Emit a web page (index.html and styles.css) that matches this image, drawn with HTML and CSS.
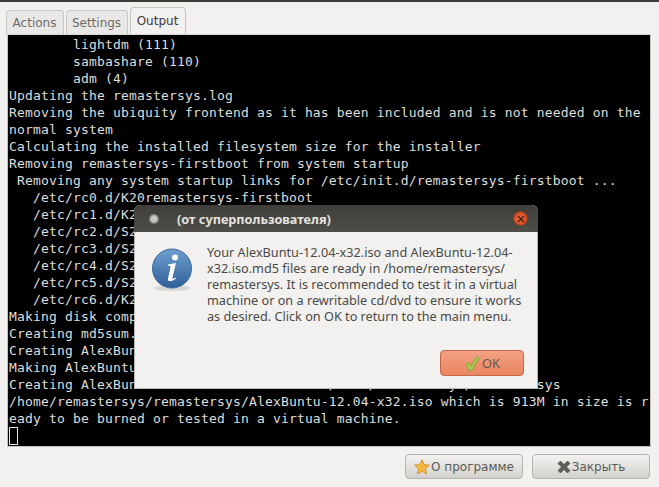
FILE: index.html
```html
<!DOCTYPE html>
<html lang="en">
<head>
<meta charset="utf-8">
<title>Output</title>
<link rel="stylesheet" href="styles.css">
</head>
<body>
<div class="window">
  <div class="tabs">
    <div class="tab">Actions</div>
    <div class="tab">Settings</div>
    <div class="tab active">Output</div>
  </div>
  <div class="frame">
    <pre class="terminal">        lightdm (111)
        sambashare (110)
        adm (4)
Updating the remastersys.log
Removing the ubiquity frontend as it has been included and is not needed on the
normal system
Calculating the installed filesystem size for the installer
Removing remastersys-firstboot from system startup
 Removing any system startup links for /etc/init.d/remastersys-firstboot ...
   /etc/rc0.d/K20remastersys-firstboot
   /etc/rc1.d/K2
   /etc/rc2.d/S2
   /etc/rc3.d/S2
   /etc/rc4.d/S2
   /etc/rc5.d/S2
   /etc/rc6.d/K2
Making disk comp
Creating md5sum.
Creating AlexBun
Making AlexBuntu
Creating AlexBuntu-12.04-x32.iso.md5 in /home/remastersys/remastersys
/home/remastersys/remastersys/AlexBuntu-12.04-x32.iso which is 913M in size is r
eady to be burned or tested in a virtual machine.
<span class="cursor"></span></pre>
  </div>
  <div class="actions">
    <button class="btn">
      <svg class="btn-icon" viewBox="0 0 16 16" width="16" height="16"><path d="M8 .8l2.2 4.8 5.2.6-3.9 3.5 1.1 5.2L8 12.3l-4.6 2.6 1.1-5.2L.6 6.2l5.2-.6z" fill="#f6b73c" stroke="#c98a2c" stroke-width=".8" stroke-linejoin="round"/></svg>
      <span>О программе</span>
    </button>
    <button class="btn">
      <svg class="btn-icon" viewBox="0 0 14 14" width="14" height="14"><path d="M1 3.5L3.5 1 7 4.5 10.5 1 13 3.5 9.5 7l3.5 3.5-2.5 2.5L7 9.5 3.5 13 1 10.5 4.5 7z" fill="#5c5c58" stroke="#4a4a47" stroke-width=".6" stroke-linejoin="round"/></svg>
      <span>Закрыть</span>
    </button>
  </div>
</div>

<div class="dialog">
  <div class="titlebar">
    <span class="menu-dot"></span>
    <span class="title">(от суперпользователя)</span>
    <span class="close">
      <svg viewBox="0 0 8 8" width="8" height="8"><path d="M1 1l6 6M7 1L1 7" stroke="#3b1a0c" stroke-width="1.2"/></svg>
    </span>
  </div>
  <div class="dialog-body">
    <div class="message-row">
      <svg class="info" viewBox="0 0 42 44" width="42" height="44">
        <defs>
          <linearGradient id="ball" x1="0" y1="0" x2="0" y2="1"><stop offset="0" stop-color="#6f9fd0"/><stop offset="1" stop-color="#2f5f97"/></linearGradient>
        </defs>
        <ellipse cx="21" cy="40" rx="18" ry="3" fill="#d8d7d3"/>
        <circle cx="21" cy="20.5" r="19.5" fill="url(#ball)" stroke="#3b6a9f" stroke-width="1"/>
        <circle cx="24" cy="9.5" r="3" fill="#fff"/>
        <path d="M17 16.5l8-1.5-3.6 15c-.2 1 .6 1.2 3.4-.4l.3.9c-3.4 2.8-9 4-8.2.2L19.6 19c.2-1-.7-1.3-2.6-1.3z" fill="#fff"/>
      </svg>
      <p class="message">Your AlexBuntu-12.04-x32.iso and AlexBuntu-12.04-<br>x32.iso.md5 files are ready in /home/remastersys/<br>remastersys. It is recommended to test it in a virtual<br>machine or on a rewritable cd/dvd to ensure it works<br>as desired. Click on OK to return to the main menu.</p>
    </div>
    <div class="dialog-actions">
      <button class="ok">
        <svg viewBox="0 0 16 16" width="17" height="17"><path d="M1.5 9l2.5-2 2.3 3.2L12 1.5l2.5 1.6L7 15H5z" fill="#a9c64f" stroke="#7f9a3a" stroke-width=".7" stroke-linejoin="round"/></svg>
        <span>OK</span>
      </button>
    </div>
  </div>
</div>
</body>
</html>
```

FILE: styles.css
```css
* { box-sizing: border-box; }
html, body { margin: 0; height: 100%; }
body {
  width: 659px;
  height: 487px;
  overflow: hidden;
  background: #f2f1f0;
  position: relative;
  font-family: "DejaVu Sans", sans-serif;
}
.window {
  height: 487px;
  border-top: 2px solid #3c3b37;
  padding: 5px 8px 0 7px;
  display: flex;
  flex-direction: column;
}
.tabs {
  display: flex;
  align-items: flex-end;
  gap: 2px;
  height: 27px;
  margin-left: -1px;
}
.tab {
  height: 24px;
  padding: 0 1px 0 0;
  width: 58px;
  display: flex;
  align-items: center;
  justify-content: center;
  font-size: 12px;
  color: #6d6c68;
  background: #e9e8e6;
  border: 1px solid #c8c6c2;
  border-bottom: 0;
  border-radius: 4px 4px 0 0;
}
.tab:nth-child(2) { width: 62px; }
.tab.active {
  height: 27px;
  width: 56px;
  padding: 0 1px 0 0;
  color: #3c3b37;
  background: #f2f1f0;
}
.frame {
  width: 644px;
  height: 413px;
  border: 1px solid #c4c2bd;
  border-top-color: #d8d6d2;
  background: #000;
  overflow: hidden;
}
.terminal {
  margin: 0;
  padding: 1px 0 0 1px;
  width: 660px;
  font-family: "DejaVu Sans Mono", monospace;
  font-size: 13px;
  letter-spacing: 0.17px;
  line-height: 17px;
  color: #dedede;
  white-space: pre;
}
.cursor {
  display: inline-block;
  width: 9px;
  height: 18px;
  border: 1px solid #e6e6e6;
  vertical-align: top;
}
.actions {
  display: flex;
  justify-content: flex-end;
  gap: 9px;
  margin: 7px 1px 0 0;
}
.btn {
  width: 118px;
  height: 25px;
  display: flex;
  align-items: center;
  justify-content: center;
  gap: 1px;
  padding: 0;
  font-family: "DejaVu Sans", sans-serif;
  font-size: 12px;
  color: #5c5b57;
  border: 1px solid #b5b3ae;
  border-radius: 4px;
  background: linear-gradient(#f4f3f2, #d3d1cd);
}
.dialog {
  position: absolute;
  left: 134px;
  top: 205px;
  width: 404px;
  height: 184px;
  background: #f2f1f0;
  border-radius: 6px 6px 0 0;
  display: flex;
  flex-direction: column;
  font-family: "Noto Sans", sans-serif;
}
.titlebar {
  height: 27px;
  background: linear-gradient(#3f3e3a, #4e4d48);
  border-radius: 6px 6px 0 0;
  display: flex;
  align-items: center;
  padding: 0 10px 0 15px;
  color: #e4e3df;
}
.menu-dot {
  width: 10px;
  height: 10px;
  border-radius: 50%;
  background: radial-gradient(circle, #c8c7c3 0 35%, #77766f 70%, #55544e 100%);
}
.title {
  margin-left: 18px;
  font-size: 12.7px;
  font-weight: 700;
  flex: 1;
}
.close {
  width: 15px;
  height: 15px;
  border-radius: 50%;
  background: radial-gradient(circle, #f0693a, #c8461c);
  border: 1px solid #8e3a1c;
  display: flex;
  align-items: center;
  justify-content: center;
}
.dialog-body {
  flex: 1;
  display: flex;
  flex-direction: column;
  padding: 10px 13px 12px 16px;
  border: 1px solid #b9b8b4;
  border-top: 0;
}
.message-row {
  display: flex;
  gap: 14px;
}
.info { flex: none; margin-top: 6px; }
.message {
  margin: 2px 0 0;
  font-size: 12.7px;
  line-height: 16px;
  color: #4b4a46;
  white-space: nowrap;
}
.dialog-actions {
  margin-top: auto;
  display: flex;
  justify-content: flex-end;
}
.ok {
  width: 84px;
  height: 26px;
  display: flex;
  align-items: center;
  justify-content: center;
  gap: 1px;
  padding: 0;
  font-family: "Noto Sans", sans-serif;
  font-size: 12.8px;
  color: #6a564c;
  border: 1px solid #c2694a;
  border-radius: 4px;
  background: linear-gradient(#f4a184, #e98560);
}
```
